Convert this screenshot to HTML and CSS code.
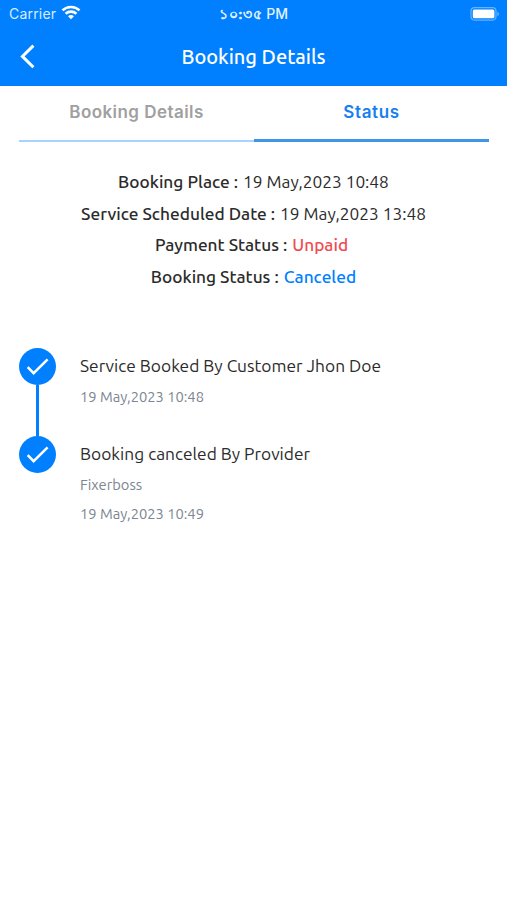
FILE: index.html
```
<!DOCTYPE html>
<html lang="en">

<head>
    <meta charset="UTF-8">
    <meta name="viewport" content="width=device-width, initial-scale=1.0">
    <title>Booking Details</title>
    <link rel="stylesheet" href="styles.css">
</head>

<body>
    <header class="header">
        <div class="status-bar">
            <div class="carrier">
                <span>Carrier</span>
                <svg class="wifi" width="20" height="15" viewBox="0 0 20 15">
                    <path d="M1.5 5.4 C6.2 0.8 13.8 0.8 18.5 5.4" />
                    <path d="M4.6 8.7 C7.6 5.9 12.4 5.9 15.4 8.7" />
                    <path class="wifi-dot" d="M7 11.2 C8.7 9.7 11.3 9.7 13 11.2 L10 14.2 Z" />
                </svg>
            </div>
            <div class="time"><span class="digits">১০:৩৫</span> PM</div>
            <svg class="battery" width="30" height="14" viewBox="0 0 30 14">
                <rect class="battery-case" x="1" y="0.7" width="25" height="12.4" rx="3.5" />
                <rect class="battery-level" x="2.8" y="2.5" width="21.6" height="8.8" rx="1.5" />
                <path class="battery-tip" d="M27.3 4.7 C29.6 5.6 29.6 8.2 27.3 9.1 Z" />
            </svg>
        </div>
        <div class="nav-bar">
            <svg class="back" width="18" height="26" viewBox="0 0 18 26">
                <path d="M14.4 1.6 L3.4 12.4 L14.4 23.2" />
            </svg>
            <h1>Booking Details</h1>
        </div>
    </header>

    <nav class="tabs">
        <a class="tab"><span class="tab-details">Booking Details</span></a>
        <a class="tab active"><span class="tab-status">Status</span></a>
    </nav>

    <div class="summary">
        <p><b>Booking Place :</b> <span>19 May,2023 10:48</span></p>
        <p><b>Service Scheduled Date :</b> <span>19 May,2023 13:48</span></p>
        <p><b>Payment Status :</b> <span class="unpaid">Unpaid</span></p>
        <p><b>Booking Status :</b> <span class="canceled">Canceled</span></p>
    </div>

    <div class="timeline">
        <div class="step">
            <div class="marker">
                <svg class="check" width="37" height="37" viewBox="0 0 37 37">
                    <circle cx="18.5" cy="18.5" r="18.5" />
                    <path d="M8.7 19.2 L14.6 25.2 L28.6 11.4" />
                </svg>
                <div class="line"></div>
            </div>
            <div class="step-text">
                <h3>Service Booked By Customer Jhon Doe</h3>
                <p>19 May,2023 10:48</p>
            </div>
        </div>
        <div class="step">
            <div class="marker">
                <svg class="check" width="37" height="37" viewBox="0 0 37 37">
                    <circle cx="18.5" cy="18.5" r="18.5" />
                    <path d="M8.7 19.2 L14.6 25.2 L28.6 11.4" />
                </svg>
            </div>
            <div class="step-text">
                <h3>Booking canceled By Provider</h3>
                <p>Fixerboss</p>
                <p>19 May,2023 10:49</p>
            </div>
        </div>
    </div>
</body>

</html>
```

FILE: styles.css
```
* {
    box-sizing: border-box;
}

body {
    margin: 0;
    min-height: 100vh;
    background-color: #fff;
    color: #2b2b2b;
    font-family: "Ubuntu", "Noto Sans", sans-serif;
}

h1, h3, p {
    margin: 0;
}

.header {
    height: 86px;
    background-color: #0080ff;
    color: #fff;
}

.status-bar {
    display: grid;
    grid-template-columns: 1fr auto 1fr;
    align-items: center;
    height: 27px;
    padding: 0 7px 0 9px;
    font-family: Inter, sans-serif;
    font-size: 14px;
    line-height: 27px;
}

.carrier {
    display: flex;
    align-items: center;
    gap: 5px;
    color: #d9ecff;
    letter-spacing: 0.2px;
}

.wifi {
    fill: none;
    stroke: #fff;
    stroke-width: 2.6;
    margin-top: -2px;
}

.wifi-dot {
    fill: #fff;
    stroke: none;
}

.time {
    padding-right: 2px;
    font-weight: 500;
    color: #e4f2ff;
}

.digits {
    letter-spacing: 0.7px;
    -webkit-text-stroke: 0.6px #e4f2ff;
}

.battery {
    justify-self: end;
}

.battery-case {
    fill: none;
    stroke: #66b3ff;
    stroke-width: 1.2;
}

.battery-level {
    fill: #fff;
}

.battery-tip {
    fill: #66b3ff;
}

.nav-bar {
    display: grid;
    grid-template-columns: 1fr auto 1fr;
    align-items: center;
    height: 59px;
    padding: 0 19px;
}

.back {
    fill: none;
    stroke: #fff;
    stroke-width: 3;
}

.nav-bar h1 {
    font-size: 20px;
    font-weight: 500;
    line-height: 26px;
}

.tabs {
    display: flex;
    margin: 0 18px 0 19px;
    height: 56px;
    font-family: Inter, sans-serif;
    font-size: 17px;
    font-weight: 600;
}

.tab {
    flex: 1;
    padding-top: 16px;
    border-bottom: 2px solid #a6d3ff;
    color: #a0a0a0;
    line-height: 20px;
    text-align: center;
}

.tab.active {
    border-bottom: 3px solid #3f96e6;
    color: #187ff0;
}

.tab-details {
    letter-spacing: 0.45px;
}

.tab-status {
    letter-spacing: 0.6px;
}

.summary {
    padding-top: 24px;
    text-align: center;
    font-size: 17.3px;
    line-height: 31.7px;
}

.summary b {
    margin-right: 1px;
    font-weight: 500;
}

.unpaid {
    margin-right: 4px;
    color: #ee4d52;
    font-weight: 500;
}

.canceled {
    color: #0080ff;
    font-weight: 500;
}

.timeline {
    padding: 55px 19px 0;
}

.step {
    display: flex;
    gap: 24px;
    min-height: 88px;
}

.marker {
    display: flex;
    flex-direction: column;
    align-items: center;
    width: 37px;
}

.check {
    flex: none;
    fill: #0080ff;
}

.check path {
    fill: none;
    stroke: #fff;
    stroke-width: 2.5;
}

.line {
    flex: 1;
    width: 3px;
    background-color: #0080ff;
}

.step-text h3 {
    padding-top: 4px;
    margin-bottom: 5px;
    font-size: 17.35px;
    font-weight: 400;
    line-height: 28px;
}

.step-text p {
    color: #7c8591;
    font-size: 14.7px;
    line-height: 24px;
    margin-bottom: 5px;
}
```
